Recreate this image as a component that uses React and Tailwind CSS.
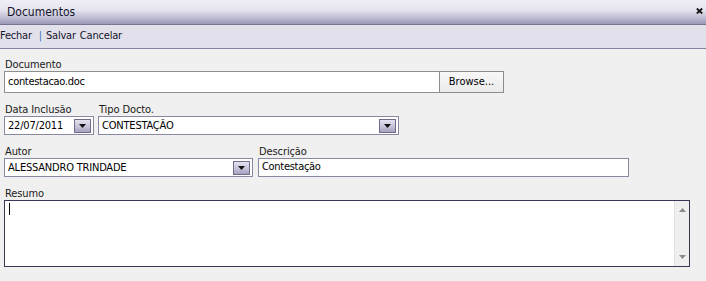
import React from "react";

function DropBtn() {
  return (
    <div className="w-[17px] h-[14px] mr-[2px] border border-[#6f6c8e] bg-[linear-gradient(to_bottom,#e4e2ef_0%,#c9c6dc_50%,#a5a1bf_100%)] flex items-center justify-center shrink-0">
      <svg width="7" height="4" viewBox="0 0 7 4">
        <path d="M0 0H7L3.5 4Z" fill="#111" />
      </svg>
    </div>
  );
}

function Combo({ value, className }) {
  return (
    <div className={"h-[19px] border border-[#8a87a3] bg-white flex items-center " + className}>
      <div className="flex-1 pl-[3px] text-[11px] leading-[15px] tracking-[-0.2px] text-black truncate">{value}</div>
      <DropBtn />
    </div>
  );
}

function Label({ children }) {
  return <div className="h-[14px] pl-[1px] pt-[2px] text-[11px] leading-[12px] tracking-[-0.1px] text-[#1a1a1a]">{children}</div>;
}

export default function App() {
  return (
    <div className="w-[706px] h-[281px] overflow-hidden bg-[#f0f0f0] font-['DejaVu_Sans_Condensed','Liberation_Sans',sans-serif]">
      <div className="h-[25px] border-b border-[#77758f] bg-[linear-gradient(to_bottom,#efeef7_0%,#e6e5f0_40%,#c4c2d6_70%,#9997b5_100%)] flex items-center justify-between">
        <span className="pl-[7px] text-[12px] text-[#14142a]">Documentos</span>
        <svg width="7" height="6" viewBox="0 0 7 6" className="mr-[3px] mb-[3px]">
          <path d="M0.8 0.5L6.2 5.5M6.2 0.5L0.8 5.5" stroke="#111" strokeWidth="1.8" />
        </svg>
      </div>
      <div className="h-[24px] bg-[#e2e1eb] border-b border-[#84829e] flex items-center text-[11px] tracking-[-0.2px] text-[#15152b]">
        <span>Fechar</span>
        <span className="ml-[7px] mr-[4px] text-[#3f74b8]">|</span>
        <span>Salvar</span>
        <span className="ml-[4px]">Cancelar</span>
      </div>
      <div className="pl-[4px] pt-[8px] flex flex-col">
        <div>
          <Label>Documento</Label>
          <div className="flex">
            <div className="w-[436px] h-[22px] border border-[#8f8f8f] bg-white flex items-center pl-[3px] text-[11px] tracking-[-0.3px] text-black">
              contestacao.doc
            </div>
            <div className="-ml-px w-[65px] h-[22px] border border-[#8c8c8c] bg-[linear-gradient(to_bottom,#f8f8f8,#ebebeb)] flex items-center justify-center text-[11px] text-black">
              Browse...
            </div>
          </div>
        </div>
        <div className="mt-[9px] flex gap-[4px]">
          <div className="w-[90px]">
            <Label>Data Inclusão</Label>
            <Combo value="22/07/2011" className="w-[90px]" />
          </div>
          <div>
            <Label>Tipo Docto.</Label>
            <Combo value="CONTESTAÇÃO" className="w-[301px]" />
          </div>
        </div>
        <div className="mt-[9px] flex gap-[5px]">
          <div>
            <Label>Autor</Label>
            <Combo value="ALESSANDRO TRINDADE" className="w-[249px]" />
          </div>
          <div>
            <Label>Descrição</Label>
            <div className="w-[371px] h-[19px] border border-[#8a87a3] bg-white flex items-center pl-[3px] text-[11px] tracking-[-0.3px] text-black">
              Contestação
            </div>
          </div>
        </div>
        <div className="mt-[9px]">
          <Label>Resumo</Label>
          <div className="w-[686px] h-[67px] border border-[#3b3654] bg-white flex">
            <div className="flex-1 pl-[4px] pt-[2px]">
              <div className="w-px h-[12px] bg-black" />
            </div>
            <div className="w-[15px] bg-[#efefef] border-l border-[#e2e2e2] flex flex-col items-center justify-between py-[7px]">
              <svg width="7" height="4" viewBox="0 0 7 4">
                <path d="M0 4H7L3.5 0Z" fill="#8a8a8a" />
              </svg>
              <svg width="7" height="4" viewBox="0 0 7 4">
                <path d="M0 0H7L3.5 4Z" fill="#8a8a8a" />
              </svg>
            </div>
          </div>
        </div>
      </div>
    </div>
  );
}
